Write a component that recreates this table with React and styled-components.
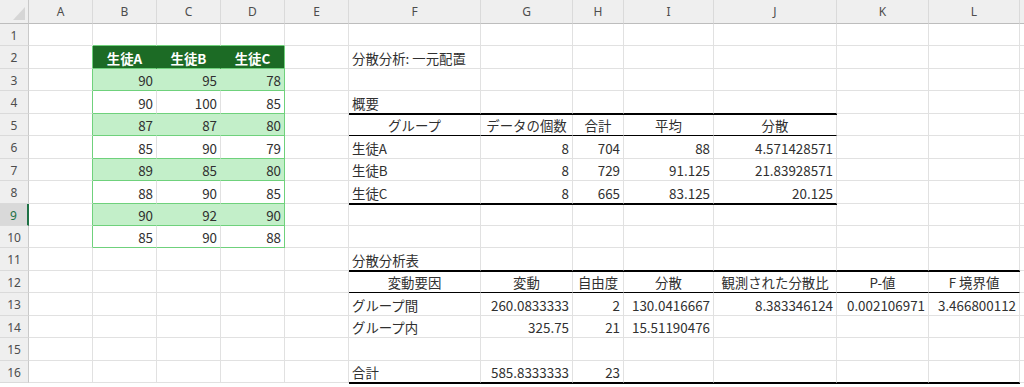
import styled, { createGlobalStyle } from "styled-components";

const GlobalStyle = createGlobalStyle`
	html, body {
		margin: 0;
		padding: 0;
		background: #ffffff;
	}
	body {
		font-family: "Noto Sans CJK JP", "Noto Sans", sans-serif;
		overflow: hidden;
	}
`;

const GRID = "#e1e1e1";
const GREEN_LINE = "#6fd17c";
const GREEN_DARK = "#1c6b25";
const GREEN_LIGHT = "#c3efc9";

const COLS = ["A", "B", "C", "D", "E", "F", "G", "H", "I", "J", "K", "L", ""];
const ROWS = [22, 23, 22, 23, 22, 23, 22, 23, 22, 22, 23, 22, 23, 22, 23, 22];

const Sheet = styled.div`
	display: grid;
	grid-template-columns: 29px 64px 64px 64px 64px 64px 132px 92px 51px 90px 123px 92px 91px 1fr;
	grid-template-rows: 24px ${ROWS.map((h) => h + "px").join(" ")};
	width: 1024px;
	height: 387px;
	overflow: hidden;
	background: #ffffff;
`;

const Corner = styled.div`
	display: flex;
	align-items: flex-end;
	justify-content: flex-end;
	padding: 0 3px 3px 0;
	background: #efefef;
	border-right: 1px solid #c9c9c9;
	border-bottom: 1px solid #bdbdbd;
	box-sizing: border-box;
`;

const ColHead = styled.div`
	display: flex;
	align-items: center;
	justify-content: center;
	background: #efefef;
	border-right: 1px solid #dadada;
	border-bottom: 1px solid #bdbdbd;
	box-sizing: border-box;
	color: #4d4d4d;
	font-family: "Noto Sans", "Noto Sans CJK JP", sans-serif;
	font-size: 12px;
`;

const RowHead = styled.div`
	display: flex;
	align-items: center;
	justify-content: center;
	background: ${(p) => (p.$active ? "#d9d9d9" : "#efefef")};
	border-right: ${(p) => (p.$active ? "2px solid #1e7145" : "1px solid #c9c9c9")};
	border-bottom: 1px solid #dadada;
	box-sizing: border-box;
	color: ${(p) => (p.$active ? "#1e7145" : "#4d4d4d")};
	font-family: "Noto Sans", "Noto Sans CJK JP", sans-serif;
	font-size: 12px;
	padding-top: 1px;
`;

const Cell = styled.div`
	display: flex;
	align-items: center;
	justify-content: ${(p) => p.$align};
	padding: 1px 3px 0 3px;
	box-sizing: border-box;
	min-width: 0;
	white-space: nowrap;
	overflow: visible;
	background: ${(p) => p.$bg || "transparent"};
	border-right: 1px solid ${(p) => p.$rb || GRID};
	border-bottom: 1px solid ${(p) => p.$bb || GRID};
	box-shadow: ${(p) => (p.$thick ? "0 1px 0 #000000" : "none")};
	color: ${(p) => p.$color || "#303030"};
	font-size: 13.4px;
	font-weight: ${(p) => (p.$bold ? 700 : 400)};
	position: relative;
	z-index: ${(p) => (p.$thick ? 1 : 0)};
`;

const scores = [
	[90, 95, 78],
	[90, 100, 85],
	[87, 87, 80],
	[85, 90, 79],
	[89, 85, 80],
	[88, 90, 85],
	[90, 92, 90],
	[85, 90, 88],
];

const values = {
	B2: "生徒A", C2: "生徒B", D2: "生徒C",
	F2: "分散分析: 一元配置",
	F4: "概要",
	F5: "グループ", G5: "データの個数", H5: "合計", I5: "平均", J5: "分散",
	F6: "生徒A", G6: 8, H6: 704, I6: 88, J6: "4.571428571",
	F7: "生徒B", G7: 8, H7: 729, I7: "91.125", J7: "21.83928571",
	F8: "生徒C", G8: 8, H8: 665, I8: "83.125", J8: "20.125",
	F11: "分散分析表",
	F12: "変動要因", G12: "変動", H12: "自由度", I12: "分散", J12: "観測された分散比", K12: "P-値", L12: "F 境界値",
	F13: "グループ間", G13: "260.0833333", H13: 2, I13: "130.0416667", J13: "8.383346124", K13: "0.002106971", L13: "3.466800112",
	F14: "グループ内", G14: "325.75", H14: 21, I14: "15.51190476",
	F16: "合計", G16: "585.8333333", H16: 23,
};
scores.forEach((row, i) => {
	row.forEach((v, j) => {
		values["BCD"[j] + (i + 3)] = v;
	});
});

const centered = new Set(["B2", "C2", "D2", "F5", "G5", "H5", "I5", "J5", "F12", "G12", "H12", "I12", "J12", "K12", "L12"]);

function cellProps(c, r) {
	const col = COLS[c];
	const id = col + r;
	const v = values[id];
	const numeric = typeof v === "number" || (typeof v === "string" && /^[0-9.]+$/.test(v));
	const p = { $align: centered.has(id) ? "center" : numeric ? "flex-end" : "flex-start" };

	const inTable = c >= 1 && c <= 3 && r >= 2 && r <= 10;
	if (inTable) {
		const last = c === 3;
		if (r === 2) {
			p.$bg = GREEN_DARK;
			p.$color = "#ffffff";
			p.$bold = true;
			p.$rb = last ? GREEN_LINE : GREEN_DARK;
		} else if (r % 2 === 1) {
			p.$bg = GREEN_LIGHT;
			p.$rb = last ? GREEN_LINE : GREEN_LIGHT;
		} else {
			p.$rb = last ? GREEN_LINE : GRID;
		}
		p.$bb = GREEN_LINE;
	}
	if (c === 0 && r >= 2 && r <= 10) p.$rb = GREEN_LINE;
	if (r === 1 && c >= 1 && c <= 3) p.$bb = GREEN_LINE;

	const summary = c >= 5 && c <= 9;
	const anova = c >= 5 && c <= 11;
	if (summary && (r === 4 || r === 8)) {
		p.$bb = "#000000";
		p.$thick = true;
	}
	if (summary && r === 5) p.$bb = "#000000";
	if (anova && (r === 11 || r === 16)) {
		p.$bb = "#000000";
		p.$thick = true;
	}
	if (anova && r === 12) p.$bb = "#000000";
	return p;
}

function CornerMark() {
	return (
		<svg width="12" height="13" viewBox="0 0 12 13">
			<polygon points="12,0 12,13 0,13" fill="#d6d6d6" />
		</svg>
	);
}

export default function App() {
	const rows = ROWS.map((_, i) => i + 1);
	return (
		<>
			<GlobalStyle />
			<Sheet>
				<Corner>
					<CornerMark />
				</Corner>
				{COLS.map((col, c) => (
					<ColHead key={"h" + c}>{col}</ColHead>
				))}
				{rows.map((r) => (
					<Row key={r} r={r} />
				))}
			</Sheet>
		</>
	);
}

function Row({ r }) {
	return (
		<>
			<RowHead $active={r === 9}>{r}</RowHead>
			{COLS.map((col, c) => {
				const id = col + r;
				return (
					<Cell key={id + c} {...cellProps(c, r)}>
						{values[id]}
					</Cell>
				);
			})}
		</>
	);
}
